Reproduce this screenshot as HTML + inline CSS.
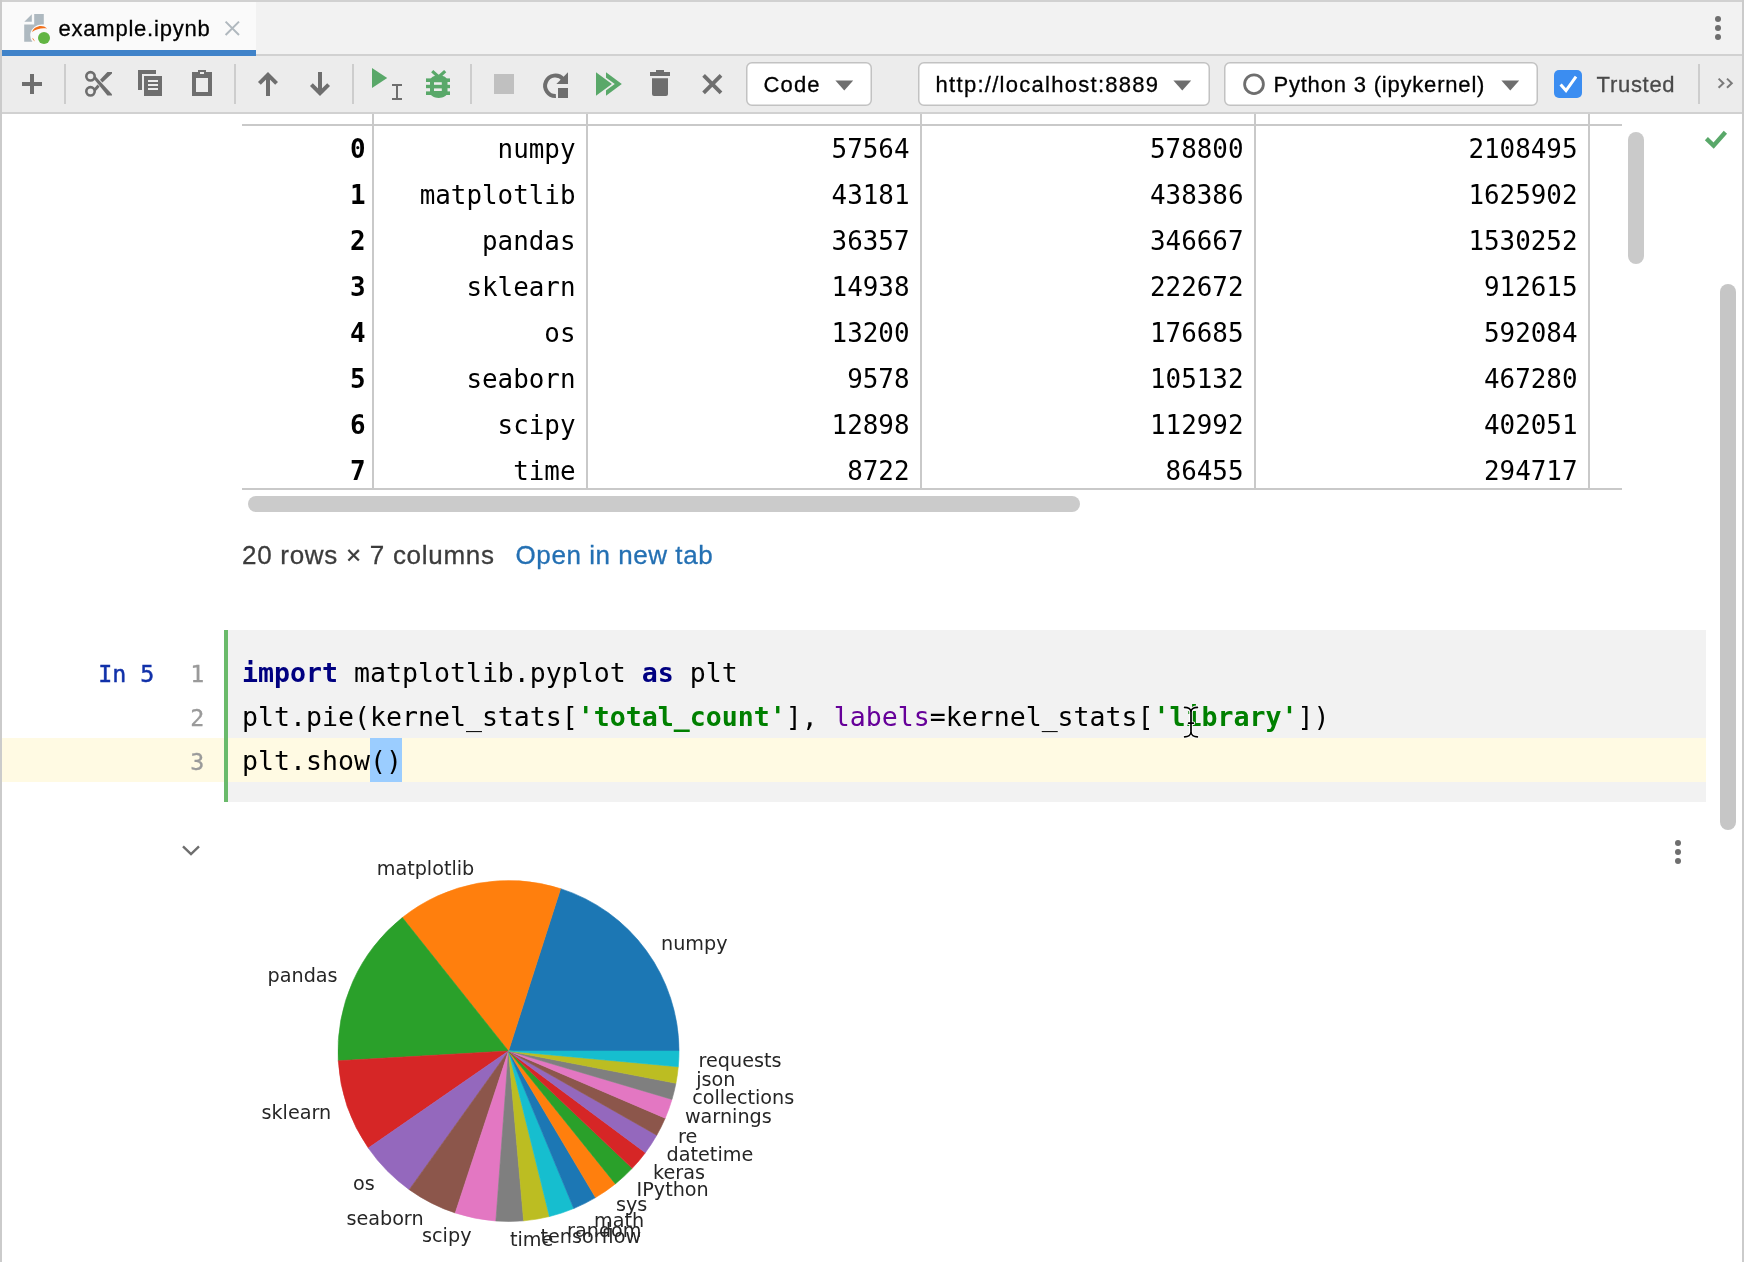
<!DOCTYPE html>
<html lang="en">
<head>
<meta charset="utf-8">
<title>example.ipynb</title>
<style>
html,body{margin:0;padding:0;}
body{width:1744px;height:1262px;overflow:hidden;background:#fff;position:relative;
  font-family:"Liberation Sans",sans-serif;color:#000;}
#gfx{position:absolute;left:0;top:0;width:1744px;height:1262px;display:block;will-change:transform;}
.pl{font-family:"DejaVu Sans",sans-serif;font-size:19.2px;fill:#262626;}
</style>
</head>
<body>
<svg id="gfx" width="1744" height="1262" viewBox="0 0 1744 1262">
<!-- frame -->
<rect x="0" y="0" width="1744" height="2" fill="#d1d1d1"/>
<rect x="0" y="0" width="2" height="1262" fill="#cbcbcb"/>
<rect x="1742" y="0" width="2" height="1262" fill="#cbcbcb"/>
<!-- tab bar -->
<rect x="2" y="2" width="1740" height="52" fill="#f2f2f2"/>
<rect x="2" y="54" width="1740" height="2" fill="#d1d1d1"/>
<rect x="2" y="2" width="254" height="48" fill="#fafafa"/>
<rect x="2" y="50" width="254" height="6" fill="#4083c9"/>
<!-- file icon -->
<g id="fileicon">
<path d="M24.3 21.8 L31.8 14.3 L31.8 21.8 Z" fill="#aeb9c0"/>
<path d="M34.2 14 H43.8 V24.6 A11.6 11.6 0 0 0 30.2 35 A11.6 11.6 0 0 0 32.4 41.8 H24.2 V24.4 H34.2 Z" fill="#aeb9c0"/>
<path d="M32.1 31.9 C34.5 26 42.5 24 47.1 28.6 C42.5 27.6 36.5 28.8 32.1 31.9 Z" fill="#f26f19"/>
<path d="M32.2 37.8 C32.8 39.6 33.8 40.8 34.8 41.6 C34.4 40.2 33.6 38.8 32.2 37.8 Z" fill="#f26f19"/>
<circle cx="44" cy="38" r="6" fill="#62b543"/>
</g>
<!-- tab close -->
<path d="M225.6 21.6 L239 35 M239 21.6 L225.6 35" stroke="#b0b8be" stroke-width="2" fill="none"/>
<!-- tab bar kebab -->
<circle cx="1718" cy="19" r="3" fill="#6e6e6e"/><circle cx="1718" cy="28" r="3" fill="#6e6e6e"/><circle cx="1718" cy="37" r="3" fill="#6e6e6e"/>
<!-- toolbar -->
<rect x="2" y="56" width="1740" height="56" fill="#ececec"/>
<rect x="2" y="112" width="1740" height="2" fill="#d1d1d1"/>
<g fill="#cdcdcd">
<rect x="64" y="64" width="2" height="40"/><rect x="234" y="64" width="2" height="40"/><rect x="352" y="64" width="2" height="40"/><rect x="470" y="64" width="2" height="40"/><rect x="1698" y="64" width="2" height="40"/>
</g>
<!-- plus -->
<path d="M22 84 H42 M32 74 V94" stroke="#6e6e6e" stroke-width="4" fill="none"/>
<!-- scissors -->
<g stroke="#6e6e6e" fill="none">
<circle cx="90.5" cy="76.3" r="4.2" stroke-width="2.6"/>
<circle cx="90.5" cy="91.3" r="4.2" stroke-width="2.6"/>
</g>
<path d="M93.6 78.6 L95.6 76.4 L112 94.2 V95.6 H107.4 Z" fill="#6e6e6e"/>
<path d="M93.6 89 L95.6 91.2 L99.6 86.8 L97.6 84.6 Z" fill="#6e6e6e"/>
<path d="M100 79.8 L107.4 72 H112 V73.4 L102.4 82.4 Z" fill="#6e6e6e"/>
<!-- copy -->
<path d="M138 70 H156 V74 H142 V90 H138 Z" fill="#6e6e6e"/>
<path d="M144 76 H162 V96 H144 Z M148 80 V82 H158 V80 Z M148 84 V86 H158 V84 Z M148 88 V90 H158 V88 Z" fill="#6e6e6e" fill-rule="evenodd"/>
<!-- paste -->
<path d="M192 72 H198 V70 H206 V72 H212 V96 H192 Z M196 78 V92 H208 V78 Z M200 72 V74 H204 V72 Z" fill="#6e6e6e" fill-rule="evenodd"/>
<!-- up / down arrows -->
<path d="M268 96 V74 M259.4 83.4 L268 74.8 L276.6 83.4" stroke="#6e6e6e" stroke-width="4" fill="none"/>
<path d="M320 72 V94 M311.4 84.6 L320 93.2 L328.6 84.6" stroke="#6e6e6e" stroke-width="4" fill="none"/>
<!-- run cell -->
<path d="M372 68 L387.2 78 L372 88 Z" fill="#59a869"/>
<path d="M392 85 H402 M392 99 H402 M397 85 V99" stroke="#6e6e6e" stroke-width="2" fill="none"/>
<!-- debug -->
<g fill="#59a869">
<path d="M430 81 C430 77.6 434 75.2 438.7 75.2 C443.5 75.2 447.5 77.6 447.5 81 V92 C447.5 95.5 443.5 97.9 438.7 97.9 C434 97.9 430 95.5 430 92 Z M434 82.2 V85 H441.8 V82.2 Z M434 88.2 V91 H441.8 V88.2 Z" fill-rule="evenodd"/>
<rect x="426" y="78.4" width="24" height="3.6"/><rect x="426" y="84.8" width="24" height="3.4"/><rect x="426" y="91.4" width="24" height="3.6"/>
<path d="M432.2 71.1 L438.7 77 L445.2 71.1" stroke="#59a869" stroke-width="3.2" fill="none"/>
</g>
<!-- stop -->
<rect x="494" y="74" width="20" height="20" fill="#c0c0c0"/>
<!-- restart -->
<path d="M555.9 95.9 A10.2 10.2 0 1 1 563.2 79.2" stroke="#6e6e6e" stroke-width="4" fill="none"/>
<path d="M568 72.3 V84 H556.4 Z" fill="#6e6e6e"/>
<rect x="558" y="88" width="10" height="10" fill="#6e6e6e"/>
<!-- run all -->
<path d="M606 72.3 L621.8 84 L606 95.7 Z" fill="#59a869"/>
<path d="M596 72.3 L611.9 84 L596 95.7 Z" fill="#59a869" stroke="#ececec" stroke-width="3.4" paint-order="stroke"/>
<!-- trash -->
<path d="M656 70 H664 V72 H670 V76 H650 V72 H656 Z" fill="#6e6e6e"/>
<path d="M652 78.3 H668 V94 A2 2 0 0 1 666 96 H654 A2 2 0 0 1 652 94 Z" fill="#6e6e6e"/>
<!-- X -->
<path d="M703.6 75.4 L721 92.8 M721 75.4 L703.6 92.8" stroke="#6e6e6e" stroke-width="3.8" fill="none"/>
<!-- dropdowns -->
<g fill="#fff" stroke="#c2c2c2" stroke-width="1.5">
<rect x="746.75" y="62.75" width="124.5" height="42.5" rx="5.2"/>
<rect x="918.75" y="62.75" width="290.5" height="42.5" rx="5.2"/>
<rect x="1224.75" y="62.75" width="312.5" height="42.5" rx="5.2"/>
</g>
<g fill="#6e6e6e">
<path d="M835.4 80.4 H853.2 L844.3 90.4 Z"/>
<path d="M1173.4 80.4 H1191.2 L1182.3 90.4 Z"/>
<path d="M1501.4 80.4 H1519.2 L1510.3 90.4 Z"/>
</g>
<circle cx="1254" cy="84.2" r="9.4" stroke="#6e6e6e" stroke-width="2.8" fill="none"/>
<!-- checkbox -->
<rect x="1554" y="70" width="28" height="28" rx="5" fill="#3b8df1"/>
<path d="M1560.6 84.4 L1566 90.6 L1576 76.6" stroke="#fff" stroke-width="3" fill="none"/>
<!-- chevrons -->
<path d="M1718.6 78.6 L1723.4 83.2 L1718.6 87.8 M1727 78.6 L1731.8 83.2 L1727 87.8" stroke="#7a7a7a" stroke-width="2" fill="none"/>
<!-- table grid -->
<g fill="#c9c9c9">
<rect x="372" y="114" width="2" height="374"/><rect x="586" y="114" width="2" height="374"/><rect x="920" y="114" width="2" height="374"/><rect x="1254" y="114" width="2" height="374"/><rect x="1588" y="114" width="2" height="374"/>
<rect x="242" y="124" width="1380" height="2"/><rect x="242" y="488" width="1380" height="2"/>
</g>
<!-- scrollbars -->
<rect x="248" y="496" width="832" height="16" rx="8" fill="#cbcbcb"/>
<rect x="1628" y="132" width="16" height="132" rx="8" fill="#cacaca"/>
<rect x="1720" y="284" width="16" height="546" rx="8" fill="#c6c6c6"/>
<!-- check -->
<path d="M1706.4 138.6 L1713.6 145.6 L1725.4 132.2" stroke="#59a869" stroke-width="4.4" fill="none"/>
<!-- code cell -->
<rect x="228" y="630" width="1478" height="172" fill="#f2f2f2"/>
<rect x="2" y="738" width="1704" height="44" fill="#fffae3"/>
<rect x="224" y="630" width="4" height="172" fill="#6aba6b"/>
<rect x="370" y="738" width="32" height="44" fill="#9bcdff"/>
<!-- output collapse chevron + kebab -->
<path d="M183 846.3 L191 854.1 L199 846.3" stroke="#6e6e6e" stroke-width="2.4" fill="none"/>
<circle cx="1678" cy="843" r="3" fill="#6e6e6e"/><circle cx="1678" cy="852" r="3" fill="#6e6e6e"/><circle cx="1678" cy="861" r="3" fill="#6e6e6e"/>
<defs><filter id="sb" x="-5%" y="-5%" width="110%" height="110%"><feGaussianBlur stdDeviation="0.55"/></filter></defs>
<g id="pie" filter="url(#sb)">
<path d="M508.5 1051.0 L679.00 1051.00 A170.5 170.5 0 0 0 560.62 888.66 Z" fill="#1f77b4" stroke="#1f77b4" stroke-width="0.6"/>
<path d="M508.5 1051.0 L560.62 888.66 A170.5 170.5 0 0 0 402.36 917.57 Z" fill="#ff7f0e" stroke="#ff7f0e" stroke-width="0.6"/>
<path d="M508.5 1051.0 L402.36 917.57 A170.5 170.5 0 0 0 338.28 1060.81 Z" fill="#2ca02c" stroke="#2ca02c" stroke-width="0.6"/>
<path d="M508.5 1051.0 L338.28 1060.81 A170.5 170.5 0 0 0 368.32 1148.06 Z" fill="#d62728" stroke="#d62728" stroke-width="0.6"/>
<path d="M508.5 1051.0 L368.32 1148.06 A170.5 170.5 0 0 0 409.25 1189.63 Z" fill="#9467bd" stroke="#9467bd" stroke-width="0.6"/>
<path d="M508.5 1051.0 L409.25 1189.63 A170.5 170.5 0 0 0 455.25 1212.97 Z" fill="#8c564b" stroke="#8c564b" stroke-width="0.6"/>
<path d="M508.5 1051.0 L455.25 1212.97 A170.5 170.5 0 0 0 495.86 1221.03 Z" fill="#e377c2" stroke="#e377c2" stroke-width="0.6"/>
<path d="M508.5 1051.0 L495.86 1221.03 A170.5 170.5 0 0 0 523.66 1220.83 Z" fill="#7f7f7f" stroke="#7f7f7f" stroke-width="0.6"/>
<path d="M508.5 1051.0 L523.66 1220.83 A170.5 170.5 0 0 0 549.46 1216.51 Z" fill="#bcbd22" stroke="#bcbd22" stroke-width="0.6"/>
<path d="M508.5 1051.0 L549.46 1216.51 A170.5 170.5 0 0 0 573.75 1208.52 Z" fill="#17becf" stroke="#17becf" stroke-width="0.6"/>
<path d="M508.5 1051.0 L573.75 1208.52 A170.5 170.5 0 0 0 595.55 1197.60 Z" fill="#1f77b4" stroke="#1f77b4" stroke-width="0.6"/>
<path d="M508.5 1051.0 L595.55 1197.60 A170.5 170.5 0 0 0 615.34 1183.88 Z" fill="#ff7f0e" stroke="#ff7f0e" stroke-width="0.6"/>
<path d="M508.5 1051.0 L615.34 1183.88 A170.5 170.5 0 0 0 632.18 1168.36 Z" fill="#2ca02c" stroke="#2ca02c" stroke-width="0.6"/>
<path d="M508.5 1051.0 L632.18 1168.36 A170.5 170.5 0 0 0 645.38 1152.66 Z" fill="#d62728" stroke="#d62728" stroke-width="0.6"/>
<path d="M508.5 1051.0 L645.38 1152.66 A170.5 170.5 0 0 0 656.75 1135.22 Z" fill="#9467bd" stroke="#9467bd" stroke-width="0.6"/>
<path d="M508.5 1051.0 L656.75 1135.22 A170.5 170.5 0 0 0 665.21 1118.17 Z" fill="#8c564b" stroke="#8c564b" stroke-width="0.6"/>
<path d="M508.5 1051.0 L665.21 1118.17 A170.5 170.5 0 0 0 671.98 1099.42 Z" fill="#e377c2" stroke="#e377c2" stroke-width="0.6"/>
<path d="M508.5 1051.0 L671.98 1099.42 A170.5 170.5 0 0 0 675.92 1083.24 Z" fill="#7f7f7f" stroke="#7f7f7f" stroke-width="0.6"/>
<path d="M508.5 1051.0 L675.92 1083.24 A170.5 170.5 0 0 0 678.27 1066.75 Z" fill="#bcbd22" stroke="#bcbd22" stroke-width="0.6"/>
<path d="M508.5 1051.0 L678.27 1066.75 A170.5 170.5 0 0 0 679.00 1051.00 Z" fill="#17becf" stroke="#17becf" stroke-width="0.6"/>
</g>
<g class="pl" filter="url(#sb)">
<text x="661.0" y="949.5" text-anchor="start">numpy</text>
<text x="474.3" y="875.4" text-anchor="end">matplotlib</text>
<text x="337.6" y="981.8" text-anchor="end">pandas</text>
<text x="331.2" y="1119.0" text-anchor="end">sklearn</text>
<text x="374.8" y="1190.2" text-anchor="end">os</text>
<text x="423.6" y="1225.2" text-anchor="end">seaborn</text>
<text x="471.5" y="1241.9" text-anchor="end">scipy</text>
<text x="509.9" y="1246.4" text-anchor="start">time</text>
<text x="540.5" y="1242.6" text-anchor="start">tensorflow</text>
<text x="567.1" y="1236.8" text-anchor="start">random</text>
<text x="594.0" y="1226.8" text-anchor="start">math</text>
<text x="615.9" y="1210.7" text-anchor="start">sys</text>
<text x="636.6" y="1195.7" text-anchor="start">IPython</text>
<text x="653.1" y="1179.3" text-anchor="start">keras</text>
<text x="666.6" y="1160.6" text-anchor="start">datetime</text>
<text x="678.0" y="1142.5" text-anchor="start">re</text>
<text x="684.9" y="1122.7" text-anchor="start">warnings</text>
<text x="692.2" y="1103.8" text-anchor="start">collections</text>
<text x="696.2" y="1085.8" text-anchor="start">json</text>
<text x="698.6" y="1066.5" text-anchor="start">requests</text>
</g>
<g font-family="'Liberation Sans',sans-serif" fill="#000" stroke="#000" stroke-width="0.3">
<text x="58.5" y="35.6" font-size="22" textLength="151.2" lengthAdjust="spacing">example.ipynb</text>
<text x="763.6" y="91.6" font-size="22" textLength="56" lengthAdjust="spacing">Code</text>
<text x="935.6" y="91.6" font-size="22" textLength="222.5" lengthAdjust="spacing">http://localhost:8889</text>
<text x="1273.4" y="91.6" font-size="22" textLength="211" lengthAdjust="spacing">Python 3 (ipykernel)</text>
<text x="1596.6" y="91.6" font-size="22" fill="#4a4a4a" stroke="#4a4a4a" textLength="78" lengthAdjust="spacing">Trusted</text>
<text x="242" y="564" font-size="26" fill="#3c3c3c" stroke="#3c3c3c" textLength="252" lengthAdjust="spacing">20 rows × 7 columns</text>
<text x="515.6" y="564" font-size="26" fill="#2470b3" stroke="#2470b3" textLength="197" lengthAdjust="spacing">Open in new tab</text>
</g>
<g font-family="'DejaVu Sans Mono','Liberation Mono',monospace" font-size="25.9" text-anchor="end" fill="#000">
<text x="365.6" y="157.5" font-weight="bold">0</text>
<text x="575.5" y="157.5">numpy</text>
<text x="909.5" y="157.5">57564</text>
<text x="1243.5" y="157.5">578800</text>
<text x="1577.5" y="157.5">2108495</text>
<text x="365.6" y="203.5" font-weight="bold">1</text>
<text x="575.5" y="203.5">matplotlib</text>
<text x="909.5" y="203.5">43181</text>
<text x="1243.5" y="203.5">438386</text>
<text x="1577.5" y="203.5">1625902</text>
<text x="365.6" y="249.5" font-weight="bold">2</text>
<text x="575.5" y="249.5">pandas</text>
<text x="909.5" y="249.5">36357</text>
<text x="1243.5" y="249.5">346667</text>
<text x="1577.5" y="249.5">1530252</text>
<text x="365.6" y="295.5" font-weight="bold">3</text>
<text x="575.5" y="295.5">sklearn</text>
<text x="909.5" y="295.5">14938</text>
<text x="1243.5" y="295.5">222672</text>
<text x="1577.5" y="295.5">912615</text>
<text x="365.6" y="341.5" font-weight="bold">4</text>
<text x="575.5" y="341.5">os</text>
<text x="909.5" y="341.5">13200</text>
<text x="1243.5" y="341.5">176685</text>
<text x="1577.5" y="341.5">592084</text>
<text x="365.6" y="387.5" font-weight="bold">5</text>
<text x="575.5" y="387.5">seaborn</text>
<text x="909.5" y="387.5">9578</text>
<text x="1243.5" y="387.5">105132</text>
<text x="1577.5" y="387.5">467280</text>
<text x="365.6" y="433.5" font-weight="bold">6</text>
<text x="575.5" y="433.5">scipy</text>
<text x="909.5" y="433.5">12898</text>
<text x="1243.5" y="433.5">112992</text>
<text x="1577.5" y="433.5">402051</text>
<text x="365.6" y="479.5" font-weight="bold">7</text>
<text x="575.5" y="479.5">time</text>
<text x="909.5" y="479.5">8722</text>
<text x="1243.5" y="479.5">86455</text>
<text x="1577.5" y="479.5">294717</text>
</g>
<g font-family="'DejaVu Sans Mono','Liberation Mono',monospace" font-size="26.576" fill="#000" xml:space="preserve">
<text x="242" y="682"><tspan fill="#000080" font-weight="bold">import</tspan> matplotlib.pyplot <tspan fill="#000080" font-weight="bold">as</tspan> plt</text>
<text x="242" y="726">plt.pie(kernel_stats[<tspan fill="#008000" font-weight="bold">'total_count'</tspan>], <tspan fill="#660099">labels</tspan>=kernel_stats[<tspan fill="#008000" font-weight="bold">'library'</tspan>])</text>
<text x="242" y="770">plt.show()</text>
</g>
<g font-family="'DejaVu Sans Mono','Liberation Mono',monospace" font-size="23.3">
<text x="98.3" y="682" fill="#1131a9" stroke="#1131a9" stroke-width="0.45" xml:space="preserve">In 5</text>
<text x="204.4" y="682" fill="#9a9a9a" stroke="#9a9a9a" stroke-width="0.3" text-anchor="end">1</text>
<text x="204.4" y="726" fill="#9a9a9a" stroke="#9a9a9a" stroke-width="0.3" text-anchor="end">2</text>
<text x="204.4" y="770" fill="#9a9a9a" stroke="#9a9a9a" stroke-width="0.3" text-anchor="end">3</text>
</g>
<!-- mouse cursor -->
<g fill="none" stroke-linecap="round">
<path d="M1184.6 707.4 C1188 707.4 1191 709 1191 712 V732 C1191 735 1188 736.8 1184.6 736.8 M1197.4 707.4 C1194 707.4 1191 709 1191 712 M1191 732 C1191 735 1194 736.8 1197.4 736.8 M1188.6 723.2 H1193.4" stroke="#fff" stroke-width="3.6"/>
<path d="M1184.6 707.4 C1188 707.4 1191 709 1191 712 V732 C1191 735 1188 736.8 1184.6 736.8 M1197.4 707.4 C1194 707.4 1191 709 1191 712 M1191 732 C1191 735 1194 736.8 1197.4 736.8 M1188.6 723.2 H1193.4" stroke="#000" stroke-width="1.7"/>
</g>
</svg>


</body>
</html>
